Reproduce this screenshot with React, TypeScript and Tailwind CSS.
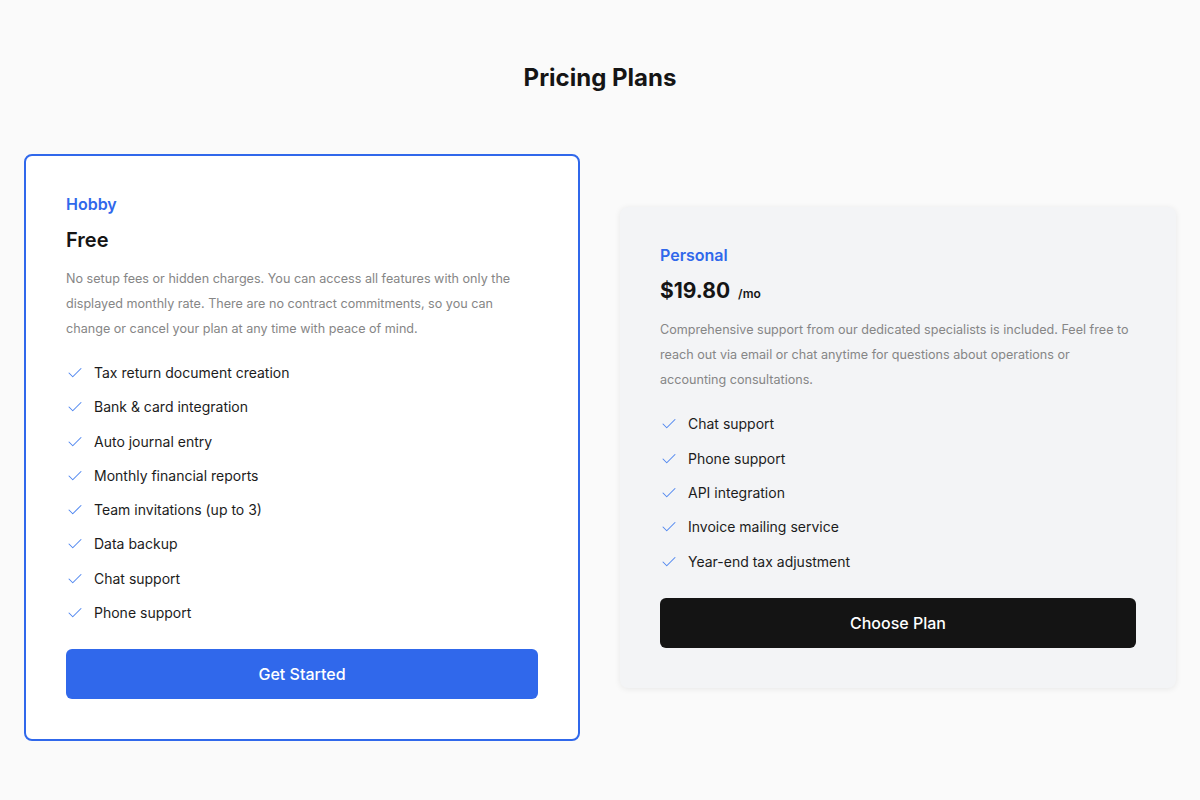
import { Check } from 'lucide-react'

type Plan = {
  name: string
  price: string
  unit?: string
  description: string
  features: string[]
  cta: string
  highlighted?: boolean
}

const plans: Plan[] = [
  {
    name: 'Hobby',
    price: 'Free',
    description:
      'No setup fees or hidden charges. You can access all features with only the displayed monthly rate. There are no contract commitments, so you can change or cancel your plan at any time with peace of mind.',
    features: [
      'Tax return document creation',
      'Bank & card integration',
      'Auto journal entry',
      'Monthly financial reports',
      'Team invitations (up to 3)',
      'Data backup',
      'Chat support',
      'Phone support',
    ],
    cta: 'Get Started',
    highlighted: true,
  },
  {
    name: 'Personal',
    price: '$19.80',
    unit: '/mo',
    description:
      'Comprehensive support from our dedicated specialists is included. Feel free to reach out via email or chat anytime for questions about operations or accounting consultations.',
    features: ['Chat support', 'Phone support', 'API integration', 'Invoice mailing service', 'Year-end tax adjustment'],
    cta: 'Choose Plan',
  },
]

function PlanCard({ plan }: { plan: Plan }) {
  return (
    <div
      className={
        plan.highlighted
          ? 'rounded-lg border-2 border-[#3068eb] bg-white p-10'
          : 'rounded-lg bg-[#f3f4f6] p-10 shadow-[0_1px_6px_rgba(0,0,0,0.08)]'
      }
    >
      <h3 className="text-base font-semibold leading-4 text-[#3068eb]">{plan.name}</h3>
      <div className="mt-[14px] flex items-baseline gap-2">
        <span className={plan.unit ? 'text-[21px] font-bold leading-7 text-[#151515]' : 'text-xl font-semibold leading-7 text-[#151515]'}>
          {plan.price}
        </span>
        {plan.unit && <span className="text-xs font-semibold text-[#151515]">{plan.unit}</span>}
      </div>
      <p className="mt-[12px] text-[12.6px] leading-[25px] text-[#868686]">{plan.description}</p>

      {/* Features */}
      <ul className="mt-[22px] flex flex-col gap-[14.3px]">
        {plan.features.map((f) => (
          <li key={f} className="flex items-center gap-[10px] text-sm leading-5 text-[#1c1c1c]">
            <Check className="h-[18px] w-[18px] text-[#4f86f0]" strokeWidth={1.4} />
            {f}
          </li>
        ))}
      </ul>

      <button
        className={
          plan.highlighted
            ? 'mt-[26px] h-[50px] w-full rounded-md bg-[#3068eb] text-base font-medium text-white'
            : 'mt-[26px] h-[50px] w-full rounded-md bg-[#141414] text-base font-medium text-white'
        }
      >
        {plan.cta}
      </button>
    </div>
  )
}

export default function App() {
  return (
    <div className="min-h-screen bg-[#fafafa] px-6 pt-[62px] font-['Inter',sans-serif]">
      <h1 className="text-center text-2xl font-bold leading-8 text-[#151515]">Pricing Plans</h1>
      <div className="mt-[60px] grid grid-cols-2 items-center gap-10">
        {plans.map((p) => (
          <PlanCard key={p.name} plan={p} />
        ))}
      </div>
    </div>
  )
}
